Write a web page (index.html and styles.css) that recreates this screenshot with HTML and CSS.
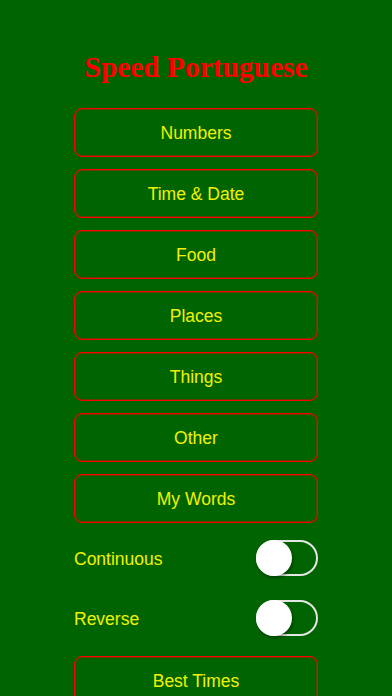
FILE: index.html
```html
<!DOCTYPE html>
<html>
<head>
<meta charset="utf-8">
<link rel="stylesheet" href="styles.css">
</head>
<body>
<div class="screen">
  <h1 class="title">Speed Portuguese</h1>
  <div class="menu">
    <div class="btn">Numbers</div>
    <div class="btn">Time &amp; Date</div>
    <div class="btn">Food</div>
    <div class="btn">Places</div>
    <div class="btn">Things</div>
    <div class="btn">Other</div>
    <div class="btn">My Words</div>
  </div>
  <div class="options">
    <div class="opt">
      <span class="opt-label">Continuous</span>
      <span class="switch"><span class="knob"></span></span>
    </div>
    <div class="opt">
      <span class="opt-label">Reverse</span>
      <span class="switch"><span class="knob"></span></span>
    </div>
  </div>
  <div class="menu">
    <div class="btn">Best Times</div>
  </div>
</div>
</body>
</html>
```
FILE: styles.css
```css
html, body {
  margin: 0;
  padding: 0;
  background: #006400;
  height: 100%;
  overflow: hidden;
}
.screen {
  display: flex;
  flex-direction: column;
  padding-top: 47px;
  font-family: "Liberation Sans", Arial, sans-serif;
}
.title {
  margin: 0;
  font-family: "Liberation Serif", "Times New Roman", serif;
  font-weight: bold;
  font-size: 29.4px;
  line-height: 40px;
  color: #ff0000;
  text-align: center;
}
.menu {
  display: flex;
  flex-direction: column;
  gap: 12px;
  margin: 21px 74px 0;
}
.btn {
  height: 49px;
  box-sizing: border-box;
  border: 1px solid #ff0000;
  box-shadow: inset 0 0 0 1px rgba(255, 0, 0, 0.4);
  border-radius: 8px;
  display: flex;
  align-items: center;
  justify-content: center;
  padding-top: 2px;
  color: #f2f200;
  font-size: 17.5px;
}
.options {
  margin: 17px 74px 0;
  display: flex;
  flex-direction: column;
  gap: 24px;
}
.options + .menu {
  margin-top: 20px;
}
.opt {
  display: flex;
  align-items: center;
  justify-content: space-between;
  height: 36px;
}
.opt-label {
  color: #f2f200;
  font-size: 17.5px;
  padding-top: 2px;
}
.switch {
  position: relative;
  width: 62px;
  height: 36px;
  box-sizing: border-box;
  border: 2px solid #e6e6e6;
  border-radius: 18px;
}
.knob {
  position: absolute;
  left: -2px;
  top: -2px;
  width: 36px;
  height: 36px;
  border-radius: 50%;
  background: #ffffff;
  box-shadow: 1px 2px 3px rgba(0,0,0,0.35);
}
```
